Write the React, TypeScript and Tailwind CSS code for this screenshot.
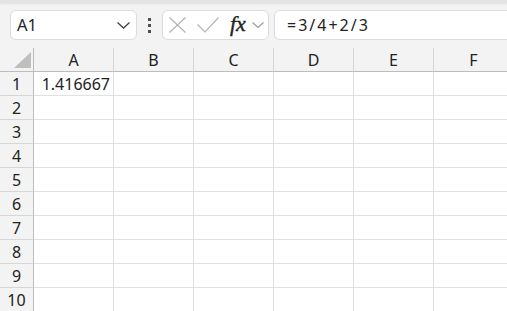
import React from "react";

const cols = ["A", "B", "C", "D", "E", "F"];
const rows = [1, 2, 3, 4, 5, 6, 7, 8, 9, 10];

export default function App() {
  return (
    <div
      className="w-[507px] h-[311px] overflow-hidden bg-[#f3f3f3] text-[#222]"
      style={{ fontFamily: '"Noto Sans", "Open Sans", sans-serif' }}
    >
      <div className="h-[3px] bg-[#e3e3e3] shadow-[0_1px_2px_rgba(0,0,0,0.08)]" />
      <div className="h-[45px] flex items-start pt-[7px] pl-[10px]">
        <div className="w-[127px] h-[30px] bg-white border border-[#dcdcdc] rounded-[6px] flex items-center pl-[6px] pr-[6px] shrink-0">
          <span className="text-[16.5px] leading-none">A1</span>
          <svg className="ml-auto" width="13" height="7" viewBox="0 0 13 7">
            <polyline points="0.5,0.5 6.5,6 12.5,0.5" fill="none" stroke="#444" strokeWidth="1.3" />
          </svg>
        </div>
        <div className="ml-[11px] w-[3px] h-[30px] flex flex-col justify-center gap-[3px] shrink-0">
          <div className="w-[3px] h-[3px] bg-[#505050]" />
          <div className="w-[3px] h-[3px] bg-[#505050]" />
          <div className="w-[3px] h-[3px] bg-[#505050]" />
        </div>
        <div className="ml-[11px] w-[107px] h-[30px] bg-white border border-[#dcdcdc] rounded-[6px] flex items-center shrink-0 pl-[6px]">
          <svg width="17" height="16" viewBox="0 0 17 16">
            <line x1="0.5" y1="0.5" x2="16.5" y2="15.5" stroke="#b4b4b4" strokeWidth="1.2" />
            <line x1="16.5" y1="0.5" x2="0.5" y2="15.5" stroke="#b4b4b4" strokeWidth="1.2" />
          </svg>
          <svg className="ml-[11px]" width="22" height="16" viewBox="0 0 22 16">
            <polyline points="0.5,7.5 8,15 21.5,0.5" fill="none" stroke="#b4b4b4" strokeWidth="1.2" />
          </svg>
          <span
            className="ml-[11px] text-[22px] italic leading-none text-[#222] -mt-[2px] [-webkit-text-stroke:0.4px_#222]"
            style={{ fontFamily: '"Liberation Serif", "DejaVu Serif", serif' }}
          >
            fx
          </span>
          <svg className="ml-[6px]" width="12" height="6" viewBox="0 0 12 6">
            <polyline points="0.5,0.5 6,5.5 11.5,0.5" fill="none" stroke="#9a9a9a" strokeWidth="1.1" />
          </svg>
        </div>
        <div className="ml-[5px] flex-1 h-[30px] bg-white border border-[#dcdcdc] rounded-l-[6px] -mr-[8px] flex items-center pl-[12px]">
          <span className="text-[16px] leading-none tracking-[2px] text-[#222]">=3/4+2/3</span>
        </div>
      </div>
      <div className="grid grid-cols-[34px_repeat(6,80px)] grid-rows-[24px] auto-rows-[24px]">
        <div className="bg-[#f3f3f3] border-r border-b border-[#bdbdbd] relative">
          <svg className="absolute right-[2px] bottom-[3px]" width="17" height="16" viewBox="0 0 17 16">
            <polygon points="17,0 17,16 0,16" fill="#bfbfbf" />
          </svg>
        </div>
        {cols.map((c) => (
          <div
            key={c}
            className="bg-[#f3f3f3] border-r border-[#d6d6d6] border-b-[#bdbdbd] border-b flex items-center justify-center text-[16px] leading-none pt-[1px]"
          >
            {c}
          </div>
        ))}
        {rows.map((r) => (
          <React.Fragment key={r}>
            <div className="bg-[#f3f3f3] border-r border-r-[#bdbdbd] border-b border-b-[#d6d6d6] flex items-center justify-center text-[16px] leading-none pt-[1px]">
              {r}
            </div>
            {cols.map((c) => (
              <div
                key={c}
                className="bg-white border-r border-b border-[#e1e1e1] flex items-center justify-end pr-[3px] text-[16px] leading-none pt-[1px]"
              >
                {r === 1 && c === "A" ? "1.416667" : ""}
              </div>
            ))}
          </React.Fragment>
        ))}
      </div>
    </div>
  );
}
